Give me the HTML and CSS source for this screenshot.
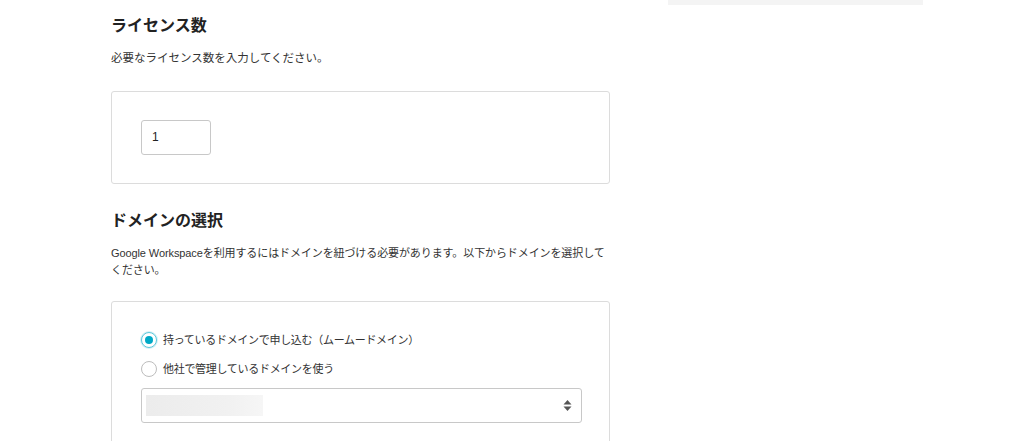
FILE: index.html
```html
<!DOCTYPE html>
<html lang="ja">
<head>
<meta charset="utf-8">
<link rel="stylesheet" href="styles.css">
</head>
<body>
<div class="page">
  <main class="main">
    <h2 class="title">ライセンス数</h2>
    <p class="desc desc-license">必要なライセンス数を入力してください。</p>
    <div class="card card-license">
      <div class="num-input">1</div>
    </div>

    <h2 class="title title-domain">ドメインの選択</h2>
    <p class="desc desc-domain">Google Workspaceを利用するにはドメインを紐づける必要があります。以下からドメインを選択してください。</p>
    <div class="card card-domain">
      <div class="radio-row">
        <span class="radio radio-on"><span class="dot"></span></span>
        <span class="radio-label">持っているドメインで申し込む（ムームードメイン）</span>
      </div>
      <div class="radio-row">
        <span class="radio"></span>
        <span class="radio-label">他社で管理しているドメインを使う</span>
      </div>
      <div class="select">
        <span class="blur"></span>
        <svg class="arrows" width="9" height="13" viewBox="0 0 9 13">
          <path d="M4.5 1 L8.5 5.5 L0.5 5.5 Z" fill="#555"/>
          <path d="M4.5 12 L8.5 7.5 L0.5 7.5 Z" fill="#555"/>
        </svg>
      </div>
    </div>
  </main>
  <aside class="side">
    <div class="side-box"></div>
  </aside>
</div>
</body>
</html>
```

FILE: styles.css
```css
* { box-sizing: border-box; }
html, body { margin: 0; padding: 0; background: #fff; }
body {
  font-family: "Liberation Sans", "Noto Sans CJK JP", "Noto Sans", sans-serif;
  color: #333;
}
.page {
  display: flex;
  padding-left: 111px;
  height: 441px;
  overflow: hidden;
}
.main {
  width: 499px;
  flex: none;
  padding-top: 12px;
}
.title {
  margin: 0;
  font-family: "Noto Sans CJK JP", sans-serif;
  font-size: 16px;
  line-height: 24px;
  font-weight: 700;
  color: #222;
}
.desc {
  margin: 14px 0 0;
  font-size: 11px;
  line-height: 17px;
  color: #333;
}
.desc-license { font-size: 11.5px; }
.desc-domain { letter-spacing: -0.1px; }
.card {
  border: 1px solid #dcdcdc;
  border-radius: 3px;
  background: #fff;
}
.card-license {
  margin-top: 24px;
  height: 93px;
  padding: 28px 29px;
}
.num-input {
  width: 70px;
  height: 35px;
  border: 1px solid #c8c8c8;
  border-radius: 3px;
  padding-left: 10px;
  font-size: 12px;
  line-height: 33px;
  color: #222;
}
.title-domain { margin-top: 23px; }
.card-domain {
  margin-top: 22px;
  height: 200px;
  padding: 29px 29px 0;
}
.radio-row {
  display: flex;
  align-items: center;
  gap: 6px;
  height: 18px;
  margin-bottom: 11px;
}
.radio {
  width: 16px;
  height: 16px;
  border-radius: 50%;
  border: 1px solid #bdbdbd;
  background: #fff;
  display: flex;
  align-items: center;
  justify-content: center;
  flex: none;
}
.radio-on {
  border: 1.5px solid #5cc8dc;
  box-shadow: 0 0 0 1px rgba(92, 200, 220, 0.25);
}
.dot {
  width: 8px;
  height: 8px;
  border-radius: 50%;
  background: #00a9c6;
}
.radio-label {
  font-size: 11px;
  line-height: 18px;
  letter-spacing: -0.3px;
  color: #333;
}
.select {
  margin-top: -1px;
  width: 441px;
  height: 35px;
  border: 1px solid #c8c8c8;
  border-radius: 3px;
  display: flex;
  align-items: center;
  justify-content: space-between;
  padding: 0 9px 0 4px;
}
.blur {
  width: 117px;
  height: 21px;
  background: linear-gradient(90deg, #ececec, #f1f1f1 70%, #f6f6f6);
  filter: blur(0.6px);
}
.arrows { display: block; }
.side {
  margin-left: 58px;
  width: 255px;
  flex: none;
}
.side-box {
  height: 5px;
  background: #f4f4f4;
}
```
